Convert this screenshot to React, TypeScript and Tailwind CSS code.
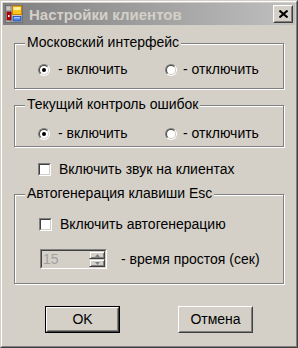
import React from "react";

const font = { fontFamily: '"Liberation Sans", Arial, sans-serif' };

function Radio({ checked }: { checked?: boolean }) {
  return (
    <div className="w-[12px] h-[12px] rounded-full border border-t-[#808080] border-l-[#808080] border-b-white border-r-white shrink-0">
      <div className="w-full h-full rounded-full border border-t-[#404040] border-l-[#404040] border-b-[#d4d0c8] border-r-[#d4d0c8] bg-white flex items-center justify-center">
        {checked && <div className="w-[4px] h-[4px] rounded-full bg-black" />}
      </div>
    </div>
  );
}

function Check() {
  return (
    <div className="w-[13px] h-[13px] border border-t-[#808080] border-l-[#808080] border-b-white border-r-white shrink-0">
      <div className="w-full h-full border border-t-[#404040] border-l-[#404040] border-b-[#d4d0c8] border-r-[#d4d0c8] bg-white" />
    </div>
  );
}

function Group({ title, className, children }: { title: string; className?: string; children: React.ReactNode }) {
  return (
    <div className={"relative border border-[#808080] shadow-[inset_1px_1px_0_#ffffff,1px_1px_0_#ffffff] " + (className ?? "")}>
      <span className="absolute left-[10px] top-[-10px] px-[2px] bg-[#d4d0c8] text-[14px] leading-[17px] text-black">
        {title}
      </span>
      {children}
    </div>
  );
}

function RadioPair() {
  return (
    <div className="flex items-center pl-[23px]">
      <div className="flex items-center w-[127px] gap-[8px]">
        <Radio checked />
        <span className="text-[14px] leading-[17px]">- включить</span>
      </div>
      <div className="flex items-center gap-[6px]">
        <Radio />
        <span className="text-[14px] leading-[17px]">- отключить</span>
      </div>
    </div>
  );
}

function Button({ label, isDefault }: { label: string; isDefault?: boolean }) {
  return (
    <div className={"w-[75px] h-[27px] " + (isDefault ? "border border-black" : "")}>
      <div className="w-full h-full border border-t-white border-l-white border-b-[#404040] border-r-[#404040]">
        <div className="w-full h-full border border-t-[#d4d0c8] border-l-[#d4d0c8] border-b-[#808080] border-r-[#808080] flex items-center justify-center text-[14px] text-black">
          {label}
        </div>
      </div>
    </div>
  );
}

export default function App() {
  return (
    <div style={font} className="w-[298px] h-[348px] bg-[#d4d0c8] text-black select-none">
      <div className="w-full h-full border border-t-[#d4d0c8] border-l-[#d4d0c8] border-b-[#404040] border-r-[#404040]">
        <div className="w-full h-full border border-t-white border-l-white border-b-[#808080] border-r-[#808080] p-[1px] flex flex-col">
          {/* Title bar */}
          <div className="h-[22px] bg-gradient-to-r from-[#808080] to-[#c0c0c0] flex items-center pl-[2px] pr-[2px]">
            <svg width="18" height="18" viewBox="0 0 18 18" className="shrink-0">
              <rect x="0.5" y="0.5" width="17" height="17" fill="#a0a0a0" stroke="#707070" />
              <rect x="1.5" y="1.5" width="15" height="15" fill="#c8c8c8" />
              <line x1="6" y1="1" x2="6" y2="17" stroke="#808080" />
              <line x1="1" y1="6" x2="6" y2="6" stroke="#808080" />
              <rect x="2" y="7" width="4" height="8" fill="#c00000" stroke="#800000" strokeWidth="0.8" />
              <rect x="3" y="10" width="1.5" height="2" fill="#ffffff" />
              <rect x="7.5" y="1" width="9" height="8.5" fill="#f8c820" stroke="#d08000" />
              <rect x="8.5" y="2" width="7" height="3" fill="#fff0a0" />
              <rect x="8" y="11.5" width="8" height="4.5" fill="#4a80e0" stroke="#2050b0" strokeWidth="0.8" />
              <rect x="9" y="12" width="6" height="1.5" fill="#a0c0ff" />
            </svg>
            <span className="ml-[6px] text-[15px] font-bold text-[#d4d0c8] leading-none whitespace-nowrap">
              Настройки клиентов
            </span>
            <div className="ml-auto w-[20px] h-[18px] border border-t-white border-l-white border-b-[#404040] border-r-[#404040]">
              <div className="w-full h-full bg-[#d4d0c8] border border-t-[#d4d0c8] border-l-[#d4d0c8] border-b-[#808080] border-r-[#808080] flex items-center justify-center">
                <svg width="9" height="8" viewBox="0 0 9 8">
                  <path d="M0.5 0.5 L8.5 7.5 M8.5 0.5 L0.5 7.5" stroke="#000" strokeWidth="2" />
                </svg>
              </div>
            </div>
          </div>

          {/* Body */}
          <div className="flex flex-col ml-[11px] w-[270px]">
            <Group title="Московский интерфейс" className="mt-[18px] h-[46px] pt-[17px]">
              <RadioPair />
            </Group>

            <Group title="Текущий контроль ошибок" className="mt-[16px] h-[42px] pt-[19px]">
              <RadioPair />
            </Group>

            <div className="flex items-center gap-[8px] ml-[24px] mt-[14px]">
              <Check />
              <span className="text-[14px] leading-[17px]">Включить звук на клиентах</span>
            </div>

            <Group title="Автогенерация клавиши Esc" className="mt-[16px] h-[90px] pt-[21px]">
              <div className="flex items-center gap-[8px] pl-[24px]">
                <Check />
                <span className="text-[14px] leading-[17px]">Включить автогенерацию</span>
              </div>
              <div className="flex items-center pl-[25px] mt-[16px]">
                <div className="w-[67px] h-[20px] border border-t-[#808080] border-l-[#808080] border-b-white border-r-white">
                  <div className="w-full h-full border border-t-[#404040] border-l-[#404040] border-b-[#d4d0c8] border-r-[#d4d0c8] bg-[#d4d0c8] flex">
                    <span className="flex-1 text-[14px] leading-[16px] text-[#a0a0a0] pl-[1px]">15</span>
                    <div className="w-[16px] flex flex-col">
                      <div className="h-[9px] border border-t-[#d4d0c8] border-l-[#d4d0c8] border-b-[#404040] border-r-[#404040] flex items-center justify-center shadow-[inset_1px_1px_0_#ffffff,inset_-1px_-1px_0_#808080]">
                        <svg width="5" height="3" viewBox="0 0 5 3"><path d="M2.5 0 L5 3 L0 3 Z" fill="#808080" /></svg>
                      </div>
                      <div className="h-[9px] border border-t-[#d4d0c8] border-l-[#d4d0c8] border-b-[#404040] border-r-[#404040] flex items-center justify-center shadow-[inset_1px_1px_0_#ffffff,inset_-1px_-1px_0_#808080]">
                        <svg width="5" height="3" viewBox="0 0 5 3"><path d="M0 0 L5 0 L2.5 3 Z" fill="#808080" /></svg>
                      </div>
                    </div>
                  </div>
                </div>
                <span className="ml-[14px] text-[14px] leading-[17px]">- время простоя (сек)</span>
              </div>
            </Group>

            <div className="flex mt-[22px] ml-[31px] gap-[58px]">
              <Button label="OK" isDefault />
              <Button label="Отмена" />
            </div>
          </div>
        </div>
      </div>
    </div>
  );
}
